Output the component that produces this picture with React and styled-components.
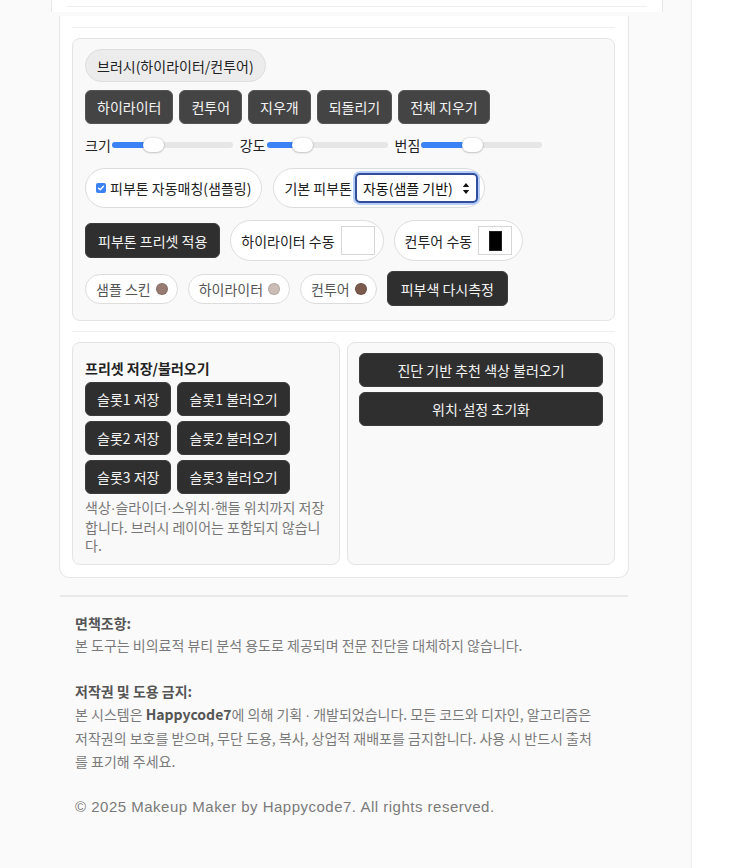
import React from "react";
import styled, { createGlobalStyle } from "styled-components";

const Global = createGlobalStyle`
  html, body { margin: 0; padding: 0; background: #ffffff; }
  body {
    font-family: "Noto Sans CJK KR", "Liberation Sans", sans-serif;
    color: #222;
    -webkit-font-smoothing: antialiased;
  }
  * { box-sizing: border-box; }
`;

const Page = styled.div`
  width: 692px;
  min-height: 868px;
  background: #fafafa;
  border-right: 1px solid #ececec;
  overflow: hidden;
`;

const TopStub = styled.div`
  margin-left: 51px;
  width: 612px;
  height: 12px;
  background: #fff;
  border-left: 1px solid #e8e8e8;
  border-right: 1px solid #e8e8e8;
  padding: 6px 15px 0;
`;

const Rule = styled.div`
  height: ${(p) => p.$h || 1}px;
  background: ${(p) => p.$c || "#efefef"};
`;

const Card = styled.div`
  margin: 4px 0 0 59px;
  width: 570px;
  background: #fff;
  border: 1px solid #e6e6e6;
  border-top: none;
  border-radius: 0 0 10px 10px;
  padding: 11px 13px 12px 12px;
  display: flex;
  flex-direction: column;
  gap: 10px;
`;

const Panel = styled.div`
  background: #f9f9f9;
  border: 1px solid #e4e4e4;
  border-radius: 8px;
  padding: ${(p) => p.$pad || "10px 11px 14px 12px"};
  display: flex;
  flex-direction: column;
`;

const Row = styled.div`
  display: flex;
  align-items: center;
  gap: ${(p) => p.$gap || 6}px;
  margin-top: ${(p) => p.$mt || 0}px;
  flex-wrap: nowrap;
`;

const TitlePill = styled.div`
  align-self: flex-start;
  height: 33px;
  padding: 0 11px;
  display: flex;
  align-items: center;
  border-radius: 17px;
  background: #ececec;
  border: 1.5px solid #dedede;
  font-size: 14px;
  color: #222;
`;

const DarkButton = styled.button`
  font-family: inherit;
  height: ${(p) => p.$h || 34}px;
  padding: 0 ${(p) => p.$px || 11}px;
  border-radius: 6px;
  border: 1px solid ${(p) => (p.$tone === "mid" ? "#555" : "#3c3c3c")};
  background: ${(p) => (p.$tone === "mid" ? "#444" : "#2f2f2f")};
  color: #f4f4f4;
  font-size: 14px;
  display: flex;
  align-items: center;
  justify-content: center;
  white-space: nowrap;
  width: ${(p) => (p.$full ? "100%" : "auto")};
  cursor: pointer;
`;

const SliderGroup = styled.div`
  display: flex;
  align-items: center;
  font-size: 14px;
  color: #222;
`;

const Track = styled.div`
  position: relative;
  width: 121px;
  height: 6px;
  border-radius: 3px;
  background: #e6e6e6;
  margin-left: 1px;
`;

const Fill = styled.div`
  height: 6px;
  border-radius: 3px;
  background: #3b82f6;
`;

const Thumb = styled.div`
  position: absolute;
  top: -4px;
  width: 21px;
  height: 14px;
  border-radius: 7px;
  background: #fff;
  box-shadow: 0 0 2px rgba(0, 0, 0, 0.25), 0 1px 2px rgba(0, 0, 0, 0.15);
`;

const Pill = styled.div`
  height: ${(p) => p.$h || 40}px;
  padding: 0 ${(p) => p.$pr || 10}px 0 ${(p) => p.$pl || 10}px;
  border-radius: 21px;
  background: #fff;
  border: 1.5px solid #dddddd;
  display: flex;
  align-items: center;
  gap: ${(p) => p.$gap || 6}px;
  font-size: 14px;
  color: ${(p) => p.$color || "#222"};
  white-space: nowrap;
`;

const Check = styled.span`
  width: 10px;
  height: 10px;
  border-radius: 2px;
  background: #3b82f6;
  display: inline-flex;
  align-items: center;
  justify-content: center;
`;

const SelectBox = styled.div`
  width: 123px;
  height: 30px;
  border: 2px solid #2f4e9c;
  border-radius: 5px;
  box-shadow: 0 0 0 2px #b6cdf6;
  background: #fff;
  display: flex;
  align-items: center;
  justify-content: space-between;
  padding: 0 6px 0 6px;
  font-size: 14px;
  color: #111;
`;

const ColorWell = styled.div`
  width: 34px;
  height: 29px;
  background: #fff;
  border: 1px solid #d6d6d6;
  display: flex;
  align-items: center;
  justify-content: center;
`;

const Swatch = styled.div`
  width: 13px;
  height: 20px;
  background: ${(p) => p.$c};
  border: 1px solid ${(p) => (p.$c === "#ffffff" ? "#fff" : "#222")};
`;

const Dot = styled.span`
  width: 12px;
  height: 12px;
  border-radius: 50%;
  background: ${(p) => p.$c};
  border: 1px solid rgba(0, 0, 0, 0.12);
`;

const Split = styled.div`
  display: grid;
  grid-template-columns: 1fr 1fr;
  gap: 7px;
`;

const SectionTitle = styled.div`
  font-size: 14px;
  font-weight: 700;
  color: #222;
  line-height: 18px;
  margin: 6px 0 5px;
`;

const ButtonStack = styled.div`
  display: flex;
  flex-direction: column;
  gap: 5px;
`;

const Note = styled.div`
  font-size: 14px;
  line-height: 18.5px;
  color: #777;
  margin-top: 4px;
  white-space: nowrap;
`;

const Mid = styled.span`
  font-family: "Liberation Sans", sans-serif;
`;

const Footer = styled.footer`
  margin: 17px 0 0 60px;
  width: 568px;
`;

const FooterBody = styled.div`
  padding: 15px 15px 0;
  font-size: 14px;
  line-height: 22.9px;
  color: #7a7a7a;
  white-space: nowrap;
`;

const FooterPara = styled.p`
  margin: 0 0 22.9px;
`;

const Strong = styled.strong`
  color: #555;
  font-weight: 700;
`;

const Copyright = styled.p`
  margin: 0;
  font-family: "Liberation Sans", "Noto Sans CJK KR", sans-serif;
  font-size: 15px;
  letter-spacing: 0.5px;
  color: #7a7a7a;
`;

const sliders = [
  { label: "크기", pos: 31 },
  { label: "강도", pos: 25 },
  { label: "번짐", pos: 41 },
];

function Slider({ label, pos }) {
  return (
    <SliderGroup>
      {label}
      <Track>
        <Fill style={{ width: pos + 4 }} />
        <Thumb style={{ left: pos }} />
      </Track>
    </SliderGroup>
  );
}

export default function App() {
  return (
    <>
      <Global />
      <Page>
        <TopStub>
          <Rule />
        </TopStub>
        <Card>
          <Rule />
          <Panel $pad="10px 11px 14px 12px">
            <TitlePill>브러시(하이라이터/컨투어)</TitlePill>
            <Row $mt={8} $gap={6}>
              {["하이라이터", "컨투어", "지우개", "되돌리기", "전체 지우기"].map((t) => (
                <DarkButton key={t} $tone="mid">
                  {t}
                </DarkButton>
              ))}
            </Row>
            <Row $mt={11} $gap={7}>
              {sliders.map((s) => (
                <Slider key={s.label} {...s} />
              ))}
            </Row>
            <Row $mt={13} $gap={11}>
              <Pill $gap={4}>
                <Check>
                  <svg width="8" height="8" viewBox="0 0 8 8">
                    <path d="M1.5 4.2 L3.2 5.8 L6.5 2.3" stroke="#fff" strokeWidth="1.4" fill="none" strokeLinecap="round" strokeLinejoin="round" />
                  </svg>
                </Check>
                피부톤 자동매칭(샘플링)
              </Pill>
              <Pill $pr={6} $gap={3}>
                기본 피부톤
                <SelectBox>
                  자동(샘플 기반)
                  <svg width="8" height="13" viewBox="0 0 8 13">
                    <path d="M4 1 L7.2 5 H0.8 Z" fill="#111" />
                    <path d="M4 12 L7.2 8 H0.8 Z" fill="#111" />
                  </svg>
                </SelectBox>
              </Pill>
            </Row>
            <Row $mt={12} $gap={10}>
              <DarkButton $h={35} $px={12}>피부톤 프리셋 적용</DarkButton>
              <Pill $h={41} $pr={8}>
                하이라이터 수동
                <ColorWell>
                  <Swatch $c="#ffffff" />
                </ColorWell>
              </Pill>
              <Pill $h={41} $pr={10}>
                컨투어 수동
                <ColorWell>
                  <Swatch $c="#000000" />
                </ColorWell>
              </Pill>
            </Row>
            <Row $mt={10} $gap={10}>
              <Pill $h={30} $color="#555" $gap={5} $pl={10} $pr={9}>
                샘플 스킨 <Dot $c="#977a71" />
              </Pill>
              <Pill $h={30} $color="#555" $gap={5} $pl={10} $pr={9}>
                하이라이터 <Dot $c="#cbbdb6" />
              </Pill>
              <Pill $h={30} $color="#555" $gap={5} $pl={10} $pr={9}>
                컨투어 <Dot $c="#7b5a4d" />
              </Pill>
              <DarkButton $h={35} $px={13}>피부색 다시측정</DarkButton>
            </Row>
          </Panel>
          <Rule />
          <Split>
            <Panel $pad="10px 11px 9px 12px">
              <SectionTitle>프리셋 저장/불러오기</SectionTitle>
              <ButtonStack>
                {[1, 2, 3].map((n) => (
                  <Row key={n} $gap={6}>
                    <DarkButton>슬롯{n} 저장</DarkButton>
                    <DarkButton>슬롯{n} 불러오기</DarkButton>
                  </Row>
                ))}
              </ButtonStack>
              <Note>
                색상<Mid>·</Mid>슬라이더<Mid>·</Mid>스위치<Mid>·</Mid>핸들 위치까지 저장
                <br />
                합니다. 브러시 레이어는 포함되지 않습니
                <br />
                다.
              </Note>
            </Panel>
            <Panel $pad="10px 11px 10px 11px">
              <ButtonStack>
                <DarkButton $full $h={34}>진단 기반 추천 색상 불러오기</DarkButton>
                <DarkButton $full $h={34}>
                  위치<Mid>·</Mid>설정 초기화
                </DarkButton>
              </ButtonStack>
            </Panel>
          </Split>
        </Card>
        <Footer>
          <Rule $h={2} $c="#e8e8e8" />
          <FooterBody>
            <FooterPara>
              <Strong>면책조항:</Strong>
              <br />
              본 도구는 비의료적 뷰티 분석 용도로 제공되며 전문 진단을 대체하지 않습니다.
            </FooterPara>
            <FooterPara>
              <Strong>저작권 및 도용 금지:</Strong>
              <br />
              본 시스템은 <Strong>Happycode7</Strong>에 의해 기획 <Mid>·</Mid> 개발되었습니다. 모든 코드와 디자인, 알고리즘은
              <br />
              저작권의 보호를 받으며, 무단 도용, 복사, 상업적 재배포를 금지합니다. 사용 시 반드시 출처
              <br />를 표기해 주세요.
            </FooterPara>
            <Copyright>© 2025 Makeup Maker by Happycode7. All rights reserved.</Copyright>
          </FooterBody>
        </Footer>
      </Page>
    </>
  );
}
